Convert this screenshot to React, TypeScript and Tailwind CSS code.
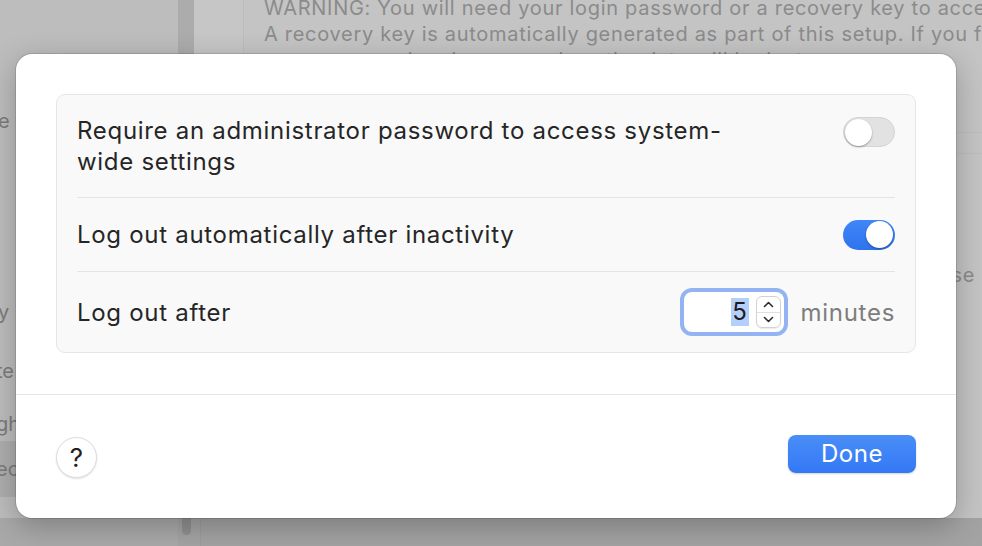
import * as React from "react";

function Toggle({ on }: { on: boolean }) {
  return (
    <div
      className={`relative w-[52px] h-[30px] rounded-full shrink-0 ${
        on
          ? "bg-gradient-to-b from-[#3f86f7] to-[#2f73ee]"
          : "bg-[#e2e2e2] border border-[#d4d4d4]"
      }`}
    >
      <div
        className={`absolute w-[27px] h-[27px] rounded-full bg-white shadow-[0_1px_2px_rgba(0,0,0,0.35)] ${
          on ? "right-[2px] top-[1.5px]" : "left-[1px] top-[0.5px]"
        }`}
      />
    </div>
  );
}

function Stepper() {
  return (
    <div className="w-[108px] h-[48px] rounded-[12px] bg-[#94b3f2] p-[4px] shrink-0">
      <div className="w-full h-full rounded-[8px] bg-white flex items-center justify-end pr-[3px] gap-[7px]">
        <span className="bg-[#b4cffa] text-[24px] leading-[28px] text-[#1d1d1d] px-[1px]">5</span>
        <div className="w-[25px] h-[32px] rounded-[6px] border border-[#d2d2d2] shadow-[0_1px_1px_rgba(0,0,0,0.08)] flex flex-col">
          <div className="flex-1 flex items-center justify-center border-b border-[#e0e0e0]">
            <svg width="11" height="7" viewBox="0 0 11 7" fill="none">
              <path d="M1.5 5.5L5.5 1.5L9.5 5.5" stroke="#2a2a2a" strokeWidth="1.6" strokeLinecap="round" strokeLinejoin="round" />
            </svg>
          </div>
          <div className="flex-1 flex items-center justify-center">
            <svg width="11" height="7" viewBox="0 0 11 7" fill="none">
              <path d="M1.5 1.5L5.5 5.5L9.5 1.5" stroke="#2a2a2a" strokeWidth="1.6" strokeLinecap="round" strokeLinejoin="round" />
            </svg>
          </div>
        </div>
      </div>
    </div>
  );
}

export default function App() {
  const font = { fontFamily: "Inter, 'Noto Sans', sans-serif" };
  return (
    <div className="relative w-[982px] h-[546px] overflow-hidden bg-[#a4a4a4]" style={font}>
      {/* dimmed window behind the sheet */}
      <div className="flex h-[518px]">
        <div className="w-[178px] shrink-0 bg-[#bdbdbd] flex flex-col pt-[106px] text-[20px] leading-[30px] text-[#7c7c7c]">
          <div className="-ml-[2px]">e</div>
          <div className="h-[161px]" />
          <div className="-ml-[2px]">y</div>
          <div className="mt-[29px] -ml-[4px]">te</div>
          <div className="mt-[23px] -ml-[4px]">gh</div>
          <div className="h-[56px] mt-[2px] bg-[#aeaeae] flex items-center -ml-[4px]">ec</div>
        </div>
        <div className="w-[16px] shrink-0 bg-[#acacac]" />
        <div className="flex-1 min-w-0 bg-[#c6c6c6] pl-[49px]">
          <div className="h-full bg-[#c4c4c4] border-l border-[#bcbcbc] pl-[20px] text-[20px] tracking-[0.7px] leading-[26px] text-[#8b8b8b] whitespace-nowrap overflow-hidden">
            <div className="-mt-[5px]">WARNING: You will need your login password or a recovery key to access your data.</div>
            <div>A recovery key is automatically generated as part of this setup. If you forget both</div>
            <div>your password and recovery key, the data will be lost.</div>
            <div className="mt-[59px] border-t border-[#bdbdbd] h-[22px] border-b" />
            <div className="mt-[108px] text-right pr-[7px]">Use</div>
          </div>
        </div>
      </div>
      <div className="flex h-[28px]">
        <div className="w-[178px] shrink-0 bg-[#a9a9a9]" />
        <div className="w-[16px] shrink-0 flex justify-center">
          <div className="w-[9px] h-[17px] rounded-b-full bg-[#909090]" />
        </div>
        <div className="w-[7px] shrink-0 border-r border-[#9c9c9c]" />
        <div className="flex-1 bg-[#a3a3a3]" />
      </div>

      {/* sheet */}
      <div className="absolute left-[16px] top-[54px] w-[940px] h-[464px] rounded-[16px] bg-white shadow-[0_0_0_1px_rgba(0,0,0,0.12),0_8px_30px_rgba(0,0,0,0.25)] flex flex-col">
        <div className="pt-[40px] px-[40px] pb-[41px] border-b border-[#e6e6e6]">
          <div className="rounded-[9px] bg-[#f9f9f9] border border-[#e6e6e6] px-[20px] text-[24px] tracking-[0.7px] text-[#262626]">
            <div className="flex items-start justify-between py-[20px] border-b border-[#e4e4e4]">
              <div className="w-[670px] leading-[31px]">
                Require an administrator password to access system-wide settings
              </div>
              <div className="pt-[2px]">
                <Toggle on={false} />
              </div>
            </div>
            <div className="flex items-center justify-between py-[21px] border-b border-[#e4e4e4]">
              <div className="leading-[31px]">Log out automatically after inactivity</div>
              <Toggle on={true} />
            </div>
            <div className="flex items-center justify-between py-[16px]">
              <div className="leading-[31px]">Log out after</div>
              <div className="flex items-center gap-[13px]">
                <Stepper />
                <span className="text-[#7d7d7d] leading-[31px]">minutes</span>
              </div>
            </div>
          </div>
        </div>
        <div className="flex-1 flex items-center justify-between px-[40px] pb-[1px]">
          <div className="w-[41px] h-[41px] rounded-full bg-white border border-[#dcdcdc] shadow-[0_1px_2px_rgba(0,0,0,0.12)] flex items-center justify-center text-[26px] text-[#1f1f1f] mt-[3px]">
            ?
          </div>
          <div className="w-[128px] h-[38px] mb-[4px] rounded-[8px] bg-gradient-to-b from-[#4a8ef8] to-[#3378f5] shadow-[0_1px_2px_rgba(0,0,0,0.18)] flex items-center justify-center text-white text-[24px] tracking-[0.5px]">
            Done
          </div>
        </div>
      </div>
    </div>
  );
}
